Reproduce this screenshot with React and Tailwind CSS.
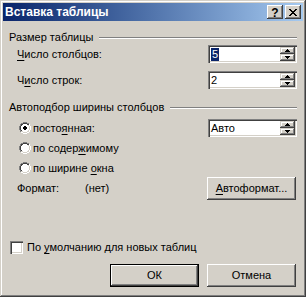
import React from "react";

const raised =
  "shadow-[inset_-1px_-1px_#404040,inset_1px_1px_#ffffff,inset_-2px_-2px_#808080,inset_2px_2px_#d4d0c8]";
const sunken =
  "shadow-[inset_1px_1px_#808080,inset_2px_2px_#404040,inset_-1px_-1px_#ffffff,inset_-2px_-2px_#d4d0c8]";

function U({ children }) {
  return <span className="underline underline-offset-[2px] decoration-1">{children}</span>;
}

function Tri({ up }) {
  return (
    <svg width="5" height="3" viewBox="0 0 5 3" className="block">
      {up ? <path d="M2 0h1v1h1v1h1v1H0V2h1V1h1z" fill="#000" /> : <path d="M0 0h5v1H4v1H3v1H2V2H1V1H0z" fill="#000" />}
    </svg>
  );
}

function SpinBtn({ up }) {
  return (
    <div className={`flex-1 bg-[#d4d0c8] flex items-center justify-center shadow-[inset_-1px_-1px_#404040,inset_1px_1px_#d4d0c8,inset_-2px_-2px_#808080,inset_2px_2px_#ffffff]`}>
      <Tri up={up} />
    </div>
  );
}

function Spin({ children, selected }) {
  return (
    <div className={`w-[89px] h-[18px] bg-white ${sunken} flex items-stretch p-[2px]`}>
      <div className="flex-1 flex items-center pl-[1px] text-[11px] leading-none">
        {selected ? <span className="bg-[#0a246a] text-white px-[1px] leading-[13px]">{children}</span> : children}
      </div>
      <div className="flex flex-col w-[15px]">
        <SpinBtn up />
        <SpinBtn />
      </div>
    </div>
  );
}

function Heading({ children }) {
  return (
    <div className="h-[13px] flex items-center">
      <span className="whitespace-nowrap">{children}</span>
      <div className="flex-1 ml-[6px] flex flex-col">
        <div className="h-px bg-[#808080]" />
        <div className="h-px bg-white" />
      </div>
    </div>
  );
}

function Radio({ checked }) {
  return (
    <svg width="12" height="12" viewBox="0 0 12 12" className="block">
      <path d="M4 0h4v1h2v1h1v2h1v4h-1v2h-1v1h-2v1H4v-1H2v-1H1V8H0V4h1V2h1V1h2z" fill="#ffffff" />
      <path d="M4 0h4v1H4zM2 1h2v1H2zM8 1h2v1H8zM1 2h1v2H1zM0 4h1v4H0zM1 8h1v2H1z" fill="#808080" />
      <path d="M4 1h4v1H4zM2 2h2v1H2zM8 2h2v1H8zM2 3h1v1H2zM1 4h1v4H1zM2 8h1v1H2z" fill="#404040" />
      <path d="M10 2h1v2h-1zM11 4h1v4h-1zM10 8h1v2h-1zM8 10h2v1H8zM2 10h2v1H2zM4 11h4v1H4z" fill="#ffffff" />
      <path d="M9 3h1v1H9zM10 4h1v4h-1zM9 8h1v1H9zM8 9h1v1H8zM3 9h1v1H3zM4 10h4v1H4zM2 9h1v1H2zM9 9h1v1H9z" fill="#d4d0c8" />
      {checked && <path d="M5 4h2v1h1v2H7v1H5V7H4V5h1z" fill="#000" />}
    </svg>
  );
}

function Button({ children, def, className = "" }) {
  if (def) {
    return (
      <div className={`w-[89px] h-[23px] border border-black ${className}`}>
        <div className={`w-full h-full bg-[#d4d0c8] ${raised} flex items-center justify-center`}>{children}</div>
      </div>
    );
  }
  return (
    <div className={`w-[89px] h-[23px] bg-[#d4d0c8] ${raised} flex items-center justify-center ${className}`}>
      {children}
    </div>
  );
}

function TitleBtn({ children }) {
  return (
    <div className={`w-[16px] h-[14px] bg-[#d4d0c8] ${raised} flex items-center justify-center`}>{children}</div>
  );
}

export default function App() {
  return (
    <div className="w-[306px] h-[297px] bg-[#d4d0c8] p-[3px] shadow-[inset_-1px_-1px_#404040,inset_1px_1px_#d4d0c8,inset_-2px_-2px_#808080,inset_2px_2px_#ffffff] font-['Liberation_Sans',Arial,sans-serif] text-[11px] text-black leading-none select-none">
      <div className="h-[18px] bg-gradient-to-r from-[#0a246a] to-[#a6caf0] flex items-center pl-[2px] pr-[2px]">
        <span className="text-white font-bold text-[12px] flex-1">Вставка таблицы</span>
        <div className="flex gap-[2px]">
          <TitleBtn>
            <span className="font-bold text-[12px] leading-none mt-[1px]">?</span>
          </TitleBtn>
          <TitleBtn>
            <svg width="8" height="7" viewBox="0 0 8 7" className="block">
              <path d="M0 0h2v1h1v1h2V1h1V0h2v1H7v1H6v1H5v1h1v1h1v1h1v1H6V6H5V5H3v1H2v1H0V6h1V5h1V4h1V3H2V2H1V1H0z" fill="#000" />
            </svg>
          </TitleBtn>
        </div>
      </div>

      <div className="px-[6px] flex flex-col">
        <div className="h-[10px]" />
        <Heading>Размер таблицы</Heading>
        <div className="h-[1px]" />
        <div className="h-[18px] flex items-center justify-between pl-[8px]">
          <span><U>Ч</U>исло столбцов:</span>
          <Spin selected>5</Spin>
        </div>
        <div className="h-[8px]" />
        <div className="h-[18px] flex items-center justify-between pl-[8px]">
          <span>Ч<U>и</U>сло строк:</span>
          <Spin>2</Spin>
        </div>
        <div className="h-[12px]" />
        <Heading>Автоподбор ширины столбцов</Heading>
        <div className="h-[5px]" />
        <div className="h-[18px] flex items-center pl-[10px]">
          <Radio checked />
          <span className="ml-[2px] flex-1">посто<U>я</U>нная:</span>
          <Spin>Авто</Spin>
        </div>
        <div className="h-[2px]" />
        <div className="h-[18px] flex items-center pl-[10px]">
          <Radio />
          <span className="ml-[2px]">по содер<U>ж</U>имому</span>
        </div>
        <div className="h-[2px]" />
        <div className="h-[18px] flex items-center pl-[10px]">
          <Radio />
          <span className="ml-[2px]">по ширине <U>о</U>кна</span>
        </div>
        <div className="h-[23px] flex items-center pl-[8px]">
          <span className="w-[68px]">Формат:</span>
          <span className="flex-1">(нет)</span>
          <Button className="mr-[1px]"><span><U>А</U>втоформат...</span></Button>
        </div>
        <div className="h-[41px]" />
        <div className="h-[13px] flex items-center pl-[1px]">
          <div className={`w-[13px] h-[13px] bg-white ${sunken}`} />
          <span className="ml-[4px]">По <U>у</U>молчанию для новых таблиц</span>
        </div>
        <div className="h-[10px]" />
        <div className="flex justify-end gap-[8px] pr-[1px]">
          <Button def>ОК</Button>
          <Button>Отмена</Button>
        </div>
      </div>
    </div>
  );
}
